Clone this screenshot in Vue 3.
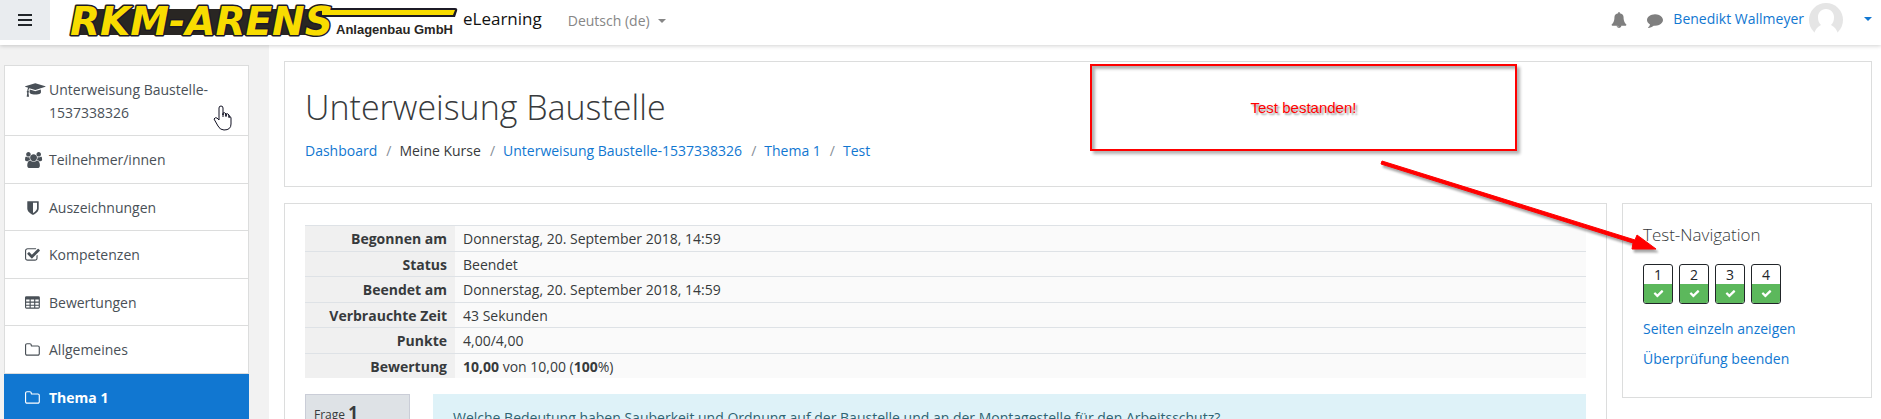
<script setup>
const icons = {
  cap: { box: '0 0 2304 1792', d: 'M1774 836l18 316q4 69-82 128t-235 93.500-323 34.500-323-34.500-235-93.500-82-128l18-316 574 181q22 7 48 7t48-7zM2304 512q0 23-22 31l-1120 352q-4 1-10 1t-10-1l-652-206q-43 34-71 111.500t-34 178.500q63 36 63 109 0 69-58 107l58 433q2 14-8 25-9 11-24 11h-192q-15 0-24-11-10-11-8-25l58-433q-58-38-58-107 0-73 65-111 11-207 98-330l-333-104q-22-8-22-31t22-31l1120-352q4-1 10-1t10 1l1120 352q22 8 22 31z' },
  users: { box: '64 0 2048 1792', d: 'M657 896q-162 5-265 128h-134q-82 0-138-40.500t-56-118.500q0-353 124-353 6 0 43.500 21t97.500 42.500 119 21.500q67 0 133-23-5 37-5 66 0 139 81 256zm1071 637q0 120-73 189.500t-194 69.500h-874q-121 0-194-69.500t-73-189.500q0-53 3.500-103.500t14-109 26.500-108.500 43-97.500 62-81 85.500-53.500 111.500-20q10 0 43 21.500t73 48 107 48 135 21.500 135-21.500 107-48 73-48 43-21.500q61 0 111.500 20t85.500 53.500 62 81 43 97.500 26.500 108.500 14 109 3.500 103.500zm-1024-1277q0 106-75 181t-181 75-181-75-75-181 75-181 181-75 181 75 75 181zm704 384q0 159-112.500 271.500t-271.500 112.500-271.500-112.500-112.500-271.500 112.500-271.500 271.500-112.500 271.500 112.500 112.500 271.500zm576 225q0 78-56 118.500t-138 40.500h-134q-103-123-265-128 81-117 81-256 0-29-5-66 66 23 133 23 59 0 119-21.500t97.500-42.500 43.500-21q124 0 124 353zm-128-609q0 106-75 181t-181 75-181-75-75-181 75-181 181-75 181 75 75 181z' },
  shield: { box: '0 0 1792 1792', d: 'M1344 960v-640h-448v1137q119-63 213-137 235-184 235-360zm192-768v768q0 86-33.500 170.500t-83 150-118 127.500-126.500 103-121 77.500-89.500 49.500-42.500 20q-12 6-26 6t-26-6q-16-7-42.500-20t-89.500-49.500-121-77.500-126.500-103-118-127.500-83-150-33.500-170.500v-768q0-26 19-45t45-19h1152q26 0 45 19t19 45z' },
  tick: { box: '64 0 1792 1792', d: 'M1472 930v318q0 119-84.500 203.500t-203.500 84.500h-832q-119 0-203.500-84.500t-84.500-203.500v-832q0-119 84.500-203.500t203.500-84.500h832q63 0 117 25 15 7 18 23 3 17-9 29l-49 49q-10 10-23 10-3 0-9-2-23-6-45-6h-832q-66 0-113 47t-47 113v832q0 66 47 113t113 47h832q66 0 113-47t47-113v-254q0-13 9-22l64-64q10-10 23-10 6 0 12 3 20 8 20 29zm231-489l-814 814q-24 24-57 24t-57-24l-430-430q-24-24-24-57t24-57l110-110q24-24 57-24t57 24l263 263 647-647q24-24 57-24t57 24l110 110q24 24 24 57t-24 57z' },
  table: { box: '64 0 1792 1792', d: 'M224 128h1344q160 0 160 160v1088q0 160-160 160h-1344q-160 0-160-160v-1088q0-160 160-160zM192 512v224h384v-224zM704 512v224h384v-224zM1216 512v224h384v-224zM192 864v224h384v-224zM704 864v224h384v-224zM1216 864v224h384v-224zM192 1216v192h384v-192zM704 1216v192h384v-192zM1216 1216v192h384v-192z' },
  folder: { box: '64 0 1792 1792', d: 'M1600 1312v-704q0-40-28-68t-68-28h-704q-40 0-68-28t-28-68v-64q0-40-28-68t-68-28h-320q-40 0-68 28t-28 68v960q0 40 28 68t68 28h1216q40 0 68-28t28-68zm128-704v704q0 92-66 158t-158 66h-1216q-92 0-158-66t-66-158v-960q0-92 66-158t158-66h320q92 0 158 66t66 158v32h672q92 0 158 66t66 158z' },
}

const menu = [
  { icon: 'cap', label: 'Unterweisung Baustelle-1537338326' },
  { icon: 'users', label: 'Teilnehmer/innen' },
  { icon: 'shield', label: 'Auszeichnungen' },
  { icon: 'tick', label: 'Kompetenzen' },
  { icon: 'table', label: 'Bewertungen' },
  { icon: 'folder', label: 'Allgemeines' },
  { icon: 'folder', label: 'Thema 1', active: true },
]

const crumbs = [
  { label: 'Dashboard', link: true },
  { label: 'Meine Kurse' },
  { label: 'Unterweisung Baustelle-1537338326', link: true },
  { label: 'Thema 1', link: true },
  { label: 'Test', link: true },
]

const summary = [
  { name: 'Begonnen am', value: 'Donnerstag, 20. September 2018, 14:59' },
  { name: 'Status', value: 'Beendet' },
  { name: 'Beendet am', value: 'Donnerstag, 20. September 2018, 14:59' },
  { name: 'Verbrauchte Zeit', value: '43 Sekunden' },
  { name: 'Punkte', value: '4,00/4,00' },
]
</script>

<template>
  <div class="page">
    <header class="navbar">
      <button class="toggle" type="button" aria-label="Navigation">
        <svg width="14" height="12" viewBox="0 0 14 12"><path d="M0 0h14v2H0zM0 5h14v2H0zM0 10h14v2H0z" /></svg>
      </button>
      <a class="brand" href="#">
        <svg class="logo" width="388" height="45" viewBox="0 0 388 45">
          <path class="ink" d="M12 9h240v26H4z" />
          <path class="bar" d="M240 8h145q3 0 2 3l-2 6H236z" />
          <text class="logo-name" x="0" y="35">RKM-ARENS</text>
          <path class="bar-fill" d="M252 10h133l-2 5H252z" />
          <text class="logo-sub" x="266" y="34">Anlagenbau GmbH</text>
        </svg>
        <span class="site">eLearning</span>
      </a>
      <button class="lang" type="button">Deutsch (de)<i class="caret"></i></button>
      <div class="tools">
        <button class="tool" type="button" aria-label="Mitteilungen">
          <svg width="16" height="16" viewBox="0 0 1792 1792"><path d="M912 1696q0-16-16-16-59 0-101.500-42.500t-42.500-101.500q0-16-16-16t-16 16q0 73 51.500 124.500t124.500 51.500q16 0 16-16zM1728 1408q0 52-38 90t-90 38h-448q0 106-75 181t-181 75-181-75-75-181h-448q-52 0-90-38t-38-90q50-42 91-88t85-119.500 74.500-158.500 50-206 19.500-260q0-152 117-282.500t307-158.500q-8-19-8-39 0-40 28-68t68-28 68 28 28 68q0 20-8 39 190 28 307 158.500t117 282.500q0 139 19.500 260t50 206 74.500 158.500 85 119.500 91 88z" /></svg>
        </button>
        <button class="tool" type="button" aria-label="Nachrichten">
          <svg width="16" height="16" viewBox="0 0 1792 1792"><path d="M1792 896q0 174-120 321.500t-326 233-450 85.500q-70 0-145-8-198 175-460 242-49 14-114 22-17 2-30.500-9t-17.500-29v-1q-3-4-.5-12t2-10 4.500-9.500l6-9 7-8.500 8-9q7-8 31-34.500t34.500-38 31-39.500 32.500-51 27-59 26-76q-157-89-247.500-220t-90.500-281q0-130 71-248.500t191-204.500 286-136.500 348-50.500q244 0 450 85.500t326 233 120 321.500z" /></svg>
        </button>
        <a class="user" href="#">
          <span>Benedikt Wallmeyer</span>
          <svg class="avatar" width="35" height="35" viewBox="0 0 35 35">
            <circle cx="17" cy="17" r="17" fill="#e5e5e5" />
            <path d="M17 6c5 0 8 4 8 8 0 4-1 6-3 8 4 2 6 5 7 9l1 4H4l1-4c1-4 3-7 7-9-2-2-3-4-3-8 0-4 3-8 8-8z" fill="#fff" />
          </svg>
          <i class="caret"></i>
        </a>
      </div>
    </header>

    <div class="body">
      <nav class="drawer">
        <ul class="menu">
          <li v-for="item in menu" :key="item.label">
            <a href="#" :class="['entry', { active: item.active }]">
              <span class="icon">
                <svg height="16" :viewBox="icons[item.icon].box"><path :d="icons[item.icon].d" fill-rule="evenodd" /></svg>
              </span>
              <span class="label"><span>{{ item.label }}</span></span>
            </a>
          </li>
        </ul>
      </nav>

      <main class="content">
        <section class="card heading">
          <h1>Unterweisung Baustelle</h1>
          <ol class="crumbs">
            <li v-for="crumb in crumbs" :key="crumb.label">
              <a v-if="crumb.link" href="#">{{ crumb.label }}</a>
              <span v-else>{{ crumb.label }}</span>
            </li>
          </ol>
        </section>

        <div class="columns">
          <section class="card attempt">
            <table class="summary">
              <tbody>
                <tr v-for="row in summary" :key="row.name">
                  <th scope="row"><span>{{ row.name }}</span></th>
                  <td><span>{{ row.value }}</span></td>
                </tr>
                <tr>
                  <th scope="row"><span>Bewertung</span></th>
                  <td><span><b>10,00</b> von 10,00 (<b>100</b>%)</span></td>
                </tr>
              </tbody>
            </table>
            <div class="question">
              <div class="info">Frage <b>1</b></div>
              <div class="formulation">Welche Bedeutung haben Sauberkeit und Ordnung auf der Baustelle und an der Montagestelle für den Arbeitsschutz?</div>
            </div>
          </section>

          <aside class="card quiznav">
            <h2>Test-Navigation</h2>
            <div class="tiles">
              <a v-for="n in 4" :key="n" class="tile" href="#">
                <span class="number">{{ n }}</span>
                <span class="state">
                  <svg width="11" height="11" viewBox="0 0 1792 1792"><path d="M1671 566q0 40-28 68l-724 724-136 136q-28 28-68 28t-68-28l-136-136-362-362q-28-28-28-68t28-68l136-136q28-28 68-28t68 28l294 295 656-657q28-28 68-28t68 28l136 136q28 28 28 68z" /></svg>
                </span>
              </a>
            </div>
            <a class="navlink" href="#">Seiten einzeln anzeigen</a>
            <a class="navlink" href="#">Überprüfung beenden</a>
          </aside>
        </div>
      </main>
    </div>

    <div class="callout">Test bestanden!</div>
    <svg class="arrow" width="290" height="100" viewBox="0 0 290 100">
      <path d="M2 7L1 10L253 89L252 95L276 95L257 81L255 86Z" />
    </svg>
    <svg class="pointer" width="20" height="26" viewBox="0 0 20 26">
      <path d="M6 15V3q0-2 2-2t2 2v7-2q2-1 3 1v2-2q2-1 3 1v2q2-1 2 1v6q0 6-7 6-4 0-6-4L1 14q1-2 3-1zM10 9v3M13 9v3M16 10v3" />
    </svg>
  </div>
</template>

<style>
body {
  margin: 0;
}
</style>

<style scoped>
.page {
  position: relative;
  display: flex;
  flex-direction: column;
  height: 100vh;
  overflow: hidden;
  background: #fff;
  color: #373a3c;
  font-family: "Open Sans", "Noto Sans", sans-serif;
  font-size: 14px;
  line-height: 22px;
}
a {
  color: #1177d1;
  text-decoration: none;
}
button {
  border: 0;
  background: none;
  padding: 0;
  font: inherit;
}
.navbar {
  position: relative;
  display: flex;
  flex: none;
  height: 45px;
  background: #fff;
  box-shadow: 0 1px 4px rgba(0, 0, 0, 0.18);
}
.toggle {
  display: grid;
  place-items: center;
  width: 50px;
  height: 40px;
  background: #e9ecef;
  fill: #212529;
}
.brand {
  display: flex;
  margin-left: 20px;
  color: #111;
}
.logo {
  overflow: visible;
}
.ink {
  fill: #292623;
}
.logo-name {
  font: italic bold 39px "DejaVu Sans", sans-serif;
  fill: #f8dc00;
  stroke: #1c1a26;
  stroke-width: 3px;
  stroke-linejoin: round;
  paint-order: stroke;
}
.bar {
  fill: #1c1a26;
}
.bar-fill {
  fill: #f8dc00;
}
.logo-sub {
  font: bold 13px "Liberation Sans", sans-serif;
  fill: #292623;
}
.site {
  margin-left: 5px;
  font-size: 17px;
  line-height: 38px;
}
.caret {
  display: inline-block;
  border: 4px solid transparent;
  border-top-color: currentColor;
  border-bottom: 0;
}
.lang {
  display: flex;
  align-items: center;
  gap: 8px;
  height: 42px;
  margin-left: 26px;
  color: #868686;
}
.tools {
  display: flex;
  align-items: flex-start;
  margin-left: auto;
  padding-right: 9px;
}
.tool {
  display: grid;
  place-items: center;
  width: 36px;
  height: 40px;
  fill: #7f7f7f;
}
.user {
  display: flex;
  align-items: center;
  height: 38px;
}
.user .avatar {
  margin: 3px 20px 0 5px;
}
.body {
  display: flex;
  flex: 1;
  min-height: 0;
}
.drawer {
  flex: none;
  box-sizing: border-box;
  width: 269px;
  padding: 20px 20px 0 4px;
  background: #f2f2f2;
}
.menu {
  margin: 0;
  padding: 0;
  list-style: none;
  border-top: 1px solid #dcdddd;
}
.entry {
  display: flex;
  padding: 12px 20px;
  border: 1px solid #dcdddd;
  border-top: 0;
  background: #fff;
  color: #495057;
  fill: #495057;
  font-size: 15px;
  line-height: 1.5;
}
.entry.active {
  border-color: #1177d1;
  background: #1177d1;
  color: #fff;
  fill: #fff;
  font-weight: bold;
}
.icon {
  flex: none;
  width: 24px;
}
.icon svg {
  display: block;
  margin-top: 4px;
}
.label span {
  font-size: 14px;
}
.content {
  flex: 1;
  min-width: 0;
  padding: 16px 9px 0 15px;
}
.card {
  box-sizing: border-box;
  border: 1px solid #dcdddd;
  background: #fff;
  padding: 20px;
}
.heading {
  min-height: 126px;
}
h1 {
  margin: 4px 0 12px;
  font-size: 34px;
  font-weight: 300;
  line-height: 42px;
}
.crumbs {
  display: flex;
  margin: 0;
  padding: 0;
  list-style: none;
}
.crumbs li + li::before {
  content: "/";
  padding: 0 8px 0 9px;
  color: #868e96;
}
.columns {
  display: flex;
  align-items: flex-start;
  gap: 15px;
  margin-top: 16px;
}
.attempt {
  flex: 1;
  min-width: 0;
}
.summary {
  width: 100%;
  margin-top: 1px;
  border-spacing: 0;
  font-size: 15px;
  line-height: 1.5;
}
.summary span {
  font-size: 14px;
}
.summary th,
.summary td {
  padding: 1px 8px;
  border-top: 1px solid #dee2e6;
  background: #fafafa;
  text-align: left;
}
.summary th {
  box-sizing: border-box;
  width: 150px;
  background: #f0f0f0;
  text-align: right;
}
.question {
  display: flex;
  align-items: flex-start;
  gap: 23px;
  margin-top: 16px;
}
.info {
  box-sizing: border-box;
  width: 105px;
  min-height: 80px;
  padding: 7px 8px;
  border: 1px solid #cacdd7;
  background: #dee2e6;
  font-size: 12px;
}
.info b {
  font-size: 17px;
}
.formulation {
  flex: 1;
  padding: 13px 20px 40px;
  background: #def2f8;
  color: #2f6473;
}
.quiznav {
  width: 250px;
  min-height: 195px;
}
h2 {
  margin: 0 0 18px;
  font-size: 17px;
  font-weight: 300;
  line-height: 22px;
}
.tiles {
  display: flex;
  gap: 6px;
  margin-bottom: 14px;
}
.tile {
  box-sizing: border-box;
  width: 30px;
  height: 40px;
  overflow: hidden;
  border: 1px solid #212529;
  border-radius: 3px;
  color: #212529;
  text-align: center;
}
.number {
  display: block;
  height: 19px;
  line-height: 19px;
}
.state {
  display: grid;
  place-items: center;
  height: 19px;
  background: #5cb85c;
  fill: #fff;
}
.navlink {
  display: block;
}
.navlink + .navlink {
  margin-top: 8px;
}
.callout {
  position: absolute;
  top: 64px;
  left: 1090px;
  box-sizing: border-box;
  width: 427px;
  height: 87px;
  border: 2px solid #f00;
  box-shadow: 3px 3px 3px rgba(0, 0, 0, 0.3), inset 3px 3px 3px rgba(0, 0, 0, 0.3);
  color: #f00;
  font: 15px/84px "Liberation Sans", Arial, sans-serif;
  text-align: center;
  text-shadow: 2px 2px 2px rgba(0, 0, 0, 0.4);
}
.arrow {
  position: absolute;
  top: 154px;
  left: 1380px;
  fill: #f00;
  stroke: #f00;
  filter: drop-shadow(2px 3px 1px rgba(0, 0, 0, 0.35));
}
.pointer {
  position: absolute;
  top: 105px;
  left: 213px;
  fill: #fff;
  stroke: #111122;
}
</style>
